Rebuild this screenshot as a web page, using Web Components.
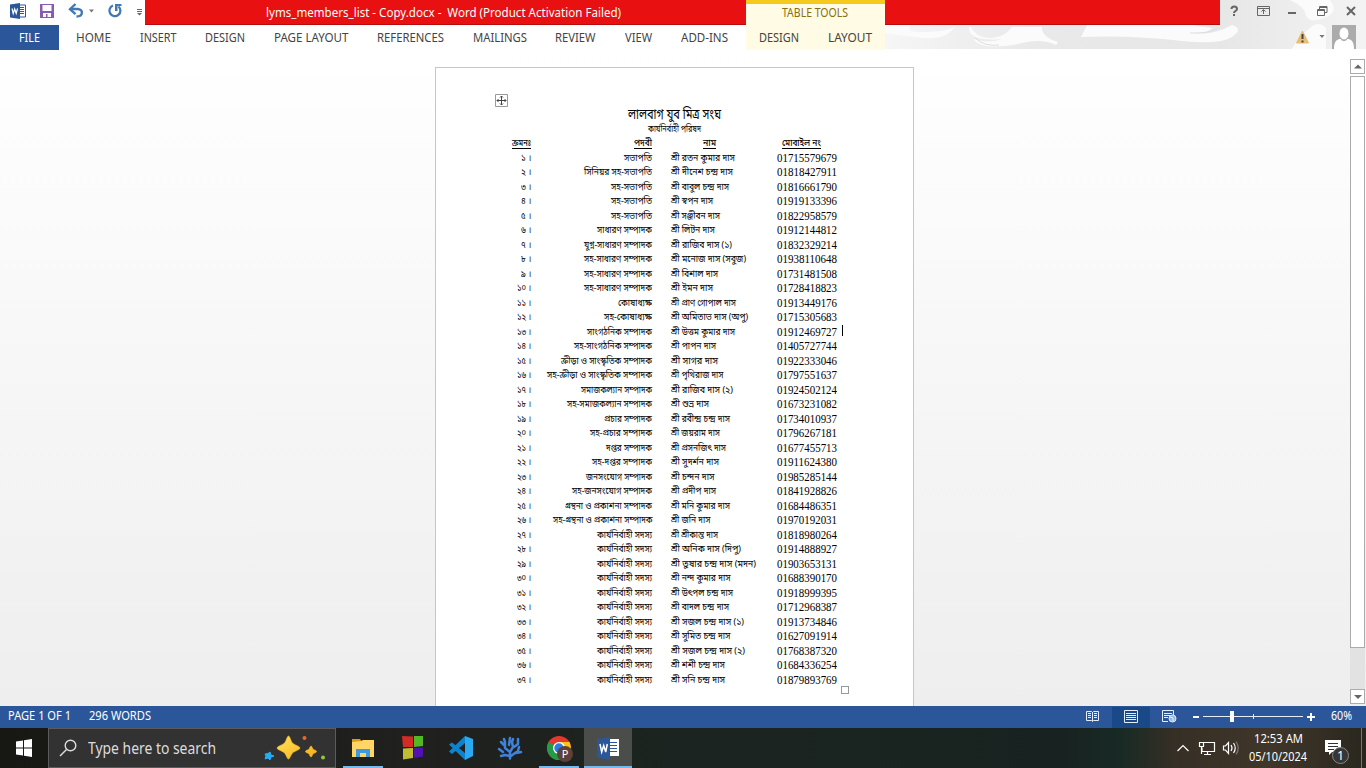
<!DOCTYPE html>
<html lang="en"><head><meta charset="utf-8"><title>lyms_members_list - Copy.docx - Word</title>
<style>html,body{margin:0;height:100%;overflow:hidden}</style></head><body>
<word-app></word-app>
<script>
/* <fit-text w="60">: one line of text, set to an exact advance width */
class FitText extends HTMLElement{
  connectedCallback(){
    const r=this.attachShadow({mode:'open'});
    r.innerHTML='<style>:host{display:inline-block;white-space:pre;text-align:left}span{display:inline-block;transform-origin:0 50%;white-space:pre}</style><span></span>';
    const s=r.querySelector('span');s.textContent=this.getAttribute('t');
    const w=+this.getAttribute('w');this.style.width=w+'px';
    const n=s.getBoundingClientRect().width;if(n)s.style.transform='scaleX('+(w/n)+')';
  }
}
function define(name,html){
  customElements.define(name,class extends HTMLElement{
    constructor(){super();this.attachShadow({mode:'open'}).innerHTML=html}
  });
}
const t=(s,w)=>`<fit-text t="${s}" w="${w}"></fit-text>`;

define('title-bar',`<style>
:host{display:grid;grid-template-columns:145px 601px 139px 335px 1fr;height:25px;font:12.500px "Noto Sans",sans-serif}
.red{background:#e81010;border-bottom:1px solid #b80c0c;box-sizing:border-box;color:#fff;height:25px;line-height:25px}
.red fit-text{margin-left:121px}
.tt{background:#fffbe5;border-top:4px solid #f6ca1c;box-sizing:border-box;color:#8a6d0c;text-align:center;line-height:18px;height:25px;padding-right:2px}
svg{display:block}</style>
<svg width="145" height="25" viewBox="0 0 145 25">
<g><path d="M19 5h6.500v12H19z" fill="#fff" stroke="#2b579a"/><path d="M20 7.500h4M20 9.500h4M20 11.500h4M20 13.500h4" stroke="#2b579a"/><path d="M10 4.500L20 3v16l-10-1.500z" fill="#2b579a"/><path d="M12 8.500l1.200 5 1.500-4.500 1.500 4.500 1.300-5" fill="none" stroke="#fff" stroke-width="1.200"/></g>
<path d="M40 4h14v14H40z" fill="#8a5bae"/><path d="M42.500 5h9v6h-9zM43 13h8v4H47.500v-3h-1.500v3h-3z" fill="#fff"/>
<path d="M71 9h6.500c6 0 6 7.500-1 7.500" fill="none" stroke="#4179b5" stroke-width="2.400"/><path d="M75.500 4L70 9.200l5.500 5" fill="none" stroke="#4179b5" stroke-width="2.400"/>
<path d="M89 9.500h5l-2.500 3z" fill="#777"/>
<path d="M113 5.500a5.500 5.500 0 1 0 5.500 1" fill="none" stroke="#4179b5" stroke-width="2.300"/><path d="M115 4h6.500v2h-4v5H115z" fill="#4179b5"/>
<path d="M137 9.500h5M137 11.500h5" stroke="#666"/><path d="M137 13h5l-2.500 2.500z" fill="#666"/></svg>
<div class="red">${t('lyms_members_list - Copy.docx -  Word (Product Activation Failed)',355)}</div>
<div class="tt">${t('TABLE TOOLS',66)}</div><div class="red"></div>
<svg width="146" height="25" viewBox="1220 0 146 25" fill="none" stroke="#666">
<path d="M1231.500 9c0-3.500 5.500-3.500 5.500 0 0 2-3 2-3 4M1234 14v2" stroke-width="2"/>
<path d="M1257.500 6.500h12v9h-12zM1257.500 8.500h12M1263.500 14v-4M1261.500 11.500l2-2 2 2"/>
<path d="M1288 13h8" stroke-width="2"/>
<path d="M1317.500 9.500h7v6h-7zM1319.500 9V6.500h7.500v6h-2M1318 10.500h6M1320 7.500h7"/>
<path d="M1347 7l8 8M1355 7l-8 8" stroke-width="2"/></svg>`);

define('ribbon-tabs',`<style>
:host{display:flex;height:25px;position:relative;font:12.500px/25px "Noto Sans",sans-serif;color:#444}
.f{background:#2b579a;color:#fff;width:59px;text-align:center}
nav{display:flex;width:687px;box-sizing:border-box;padding-left:17.300px;gap:28.700px}
nav fit-text:last-child{margin-left:1px}
.c{display:flex;width:139px;background:#fffbe5;box-sizing:border-box;padding-left:13px;gap:29px}
.a{margin-left:auto;width:80px}svg{display:block}</style>
<div class="f">${t('FILE',21)}</div>
<nav>${[['HOME',35],['INSERT',36.5],['DESIGN',40],['PAGE LAYOUT',74.5],['REFERENCES',67],['MAILINGS',54],['REVIEW',40.5],['VIEW',27],['ADD-INS',47]].map(a=>t(...a)).join('')}</nav>
<div class="c">${t('DESIGN',40)}${t('LAYOUT',44)}</div>
<svg class="a" width="80" height="25" viewBox="1286 25 80 25"><path d="M1302.500 31l6 12h-12z" fill="#e8bd77" stroke="#e8bd77" stroke-linejoin="round"/><path d="M1302.500 34v5M1302.500 40.500v2" stroke="#444" stroke-width="2"/><path d="M1319.500 35h5l-2.500 3z" fill="#777"/><path d="M1332 25h24v24h-24z" fill="#ababab"/><path d="M1334 49c0-8 3-10 7-10l3 2 3-2c4 0 7 2 7 10z" fill="#fff"/><ellipse cx="1344" cy="33.500" rx="4.500" ry="6" fill="#fff"/><path d="M1341 39.500q3 2.500 6 0" fill="none" stroke="#ababab"/></svg>`);

const pos={a:['সভাপতি',28],b:['সহ-সভাপতি',41],s:['সহ-সাধারণ সম্পাদক',68],k:['কার্যনির্বাহী সদস্য',55]};
const rows=[
['a','রতন কুমার দাস',64,'01715579679'],[['সিনিয়র সহ-সভাপতি',68],'দীনেশ চন্দ্র দাস',62,'01818427911'],
['b','বাবুল চন্দ্র দাস',58,'01816661790'],['b','স্বপন দাস',42,'01919133396'],['b','সঞ্জীবন দাস',49,'01822958579'],
[['সাধারণ সম্পাদক',55],'লিটন দাস',44,'01912144812'],[['যুগ্ন-সাধারণ সম্পাদক',68],'রাজিব দাস (১)',61,'01832329214'],
['s','মনোজ দাস (সবুজ)',75,'01938110648'],['s','বিশাল দাস',47,'01731481508'],['s','ইমন দাস',42,'01728418823'],
[['কোষাধ্যক্ষ',34],'প্রাণ গোপাল দাস',65,'01913449176'],[['সহ-কোষাধ্যক্ষ',48],'অমিতাভ দাস (অপু)',77,'01715305683'],
[['সাংগঠনিক সম্পাদক',65],'উত্তম কুমার দাস',64,'01912469727'],[['সহ-সাংগঠনিক সম্পাদক',78],'পাপন দাস',45,'01405727744'],
[['ক্রীড়া ও সাংস্কৃতিক সম্পাদক',91],'সাগর দাস',47,'01922333046'],[['সহ-ক্রীড়া ও সাংস্কৃতিক সম্পাদক',105],'পৃথিরাজ দাস',52.5,'01797551637'],
[['সমাজকল্যান সম্পাদক',71],'রাজিব দাস (২)',62,'01924502124'],[['সহ-সমাজকল্যান সম্পাদক',85],'শুভ্র দাস',38,'01673231082'],
[['প্রচার সম্পাদক',48],'রবীন্দ্র চন্দ্র দাস',59,'01734010937'],[['সহ-প্রচার সম্পাদক',62],'জয়রাম দাস',49,'01796267181'],
[['দপ্তর সম্পাদক',46],'প্রসনজিৎ দাস',55,'01677455713'],[['সহ-দপ্তর সম্পাদক',60],'সুদর্শন দাস',48,'01911624380'],
[['জনসংযোগ সম্পাদক',66],'চন্দন দাস',43.5,'01985285144'],[['সহ-জনসংযোগ সম্পাদক',80],'প্রদীপ দাস',45,'01841928826'],
[['গ্রন্থনা ও প্রকাশনা সম্পাদক',87],'মনি কুমার দাস',59,'01684486351'],[['সহ-গ্রন্থনা ও প্রকাশনা সম্পাদক',99.5],'জনি দাস',39.5,'01970192031'],
['k','শ্রীকান্ত দাস',47,'01818980264'],['k','অনিক দাস (দিপু)',70,'01914888927'],['k','তুষার চন্দ্র দাস (মদন)',85,'01903653131'],
['k','নন্দ কুমার দাস',59.5,'01688390170'],['k','উৎপল চন্দ্র দাস',62,'01918999395'],['k','বাদল চন্দ্র দাস',58,'01712968387'],
['k','সজল চন্দ্র দাস (১)',73,'01913734846'],['k','সুমিত চন্দ্র দাস',59.5,'01627091914'],['k','সজল চন্দ্র দাস (২)',74,'01768387320'],
['k','শশী চন্দ্র দাস',54,'01684336254'],['k','সনি চন্দ্র দাস',54,'01879893769']];
const bn=n=>String(n).replace(/\d/g,d=>'০১২৩৪৫৬৭৮৯'[d]);

define('member-table',`<style>
:host{display:block;font:9px/14.5px "Noto Sans Bengali","Noto Serif Bengali",serif;color:#000}
.r{display:grid;grid-template-columns:31px 121px 19px 106px 70px;height:14.500px;white-space:nowrap}
.r>:nth-child(1),.r>:nth-child(2){text-align:right}
.r>:nth-child(4){grid-column:5}.r>:nth-child(3){grid-column:4}
.p{font:12px/12px "Liberation Serif",serif}
.h fit-text{box-shadow:0 -1.500px 0 #000 inset;height:11px;line-height:11px;font-weight:500}
.h fit-text{box-shadow:none;background:linear-gradient(#000,#000) 0 9px/100% 1px no-repeat}
.h>:nth-child(3){padding-left:32px}.h>:nth-child(4){padding-left:5px}
</style>
<div class="r h"><div>${t('ক্রমনঃ',19)}</div><div>${t('পদবী',18)}</div><div>${t('নাম',13)}</div><div>${t('মোবাইল নং',39)}</div></div>
${rows.map((r,i)=>`<div class="r"><div>${t(bn(i+1)+' ।',i<9?10:14)}</div><div>${t(...(pos[r[0]]||r[0]))}</div><div>${t('শ্রী '+r[1],r[2])}</div><div class="p">${t(r[3],60)}</div></div>`).join('')}`);

define('document-page',`<style>
:host{display:block;position:relative;box-sizing:border-box;width:479px;height:640px;background:#fff;border:1px solid #c6c6c6;border-bottom:0;padding:40px 0 0 64px;font-family:"Noto Sans Bengali","Noto Serif Bengali",serif}
.t{width:349px;text-align:center}
.t1{font-size:14px;line-height:16px;height:16px}.t2{font-size:9px;line-height:13px;height:14px}
member-table{margin-top:-1px}
.x{position:absolute}</style>
<div class="t t1">${t('লালবাগ যুব মিত্র সংঘ',93)}</div><div class="t t2">${t('কার্যনির্বাহী পরিষদ',53)}</div>
<member-table></member-table>
<svg class="x" style="left:59px;top:26px" width="13" height="13" fill="none"><path d="M.5.500h12v12H.5z" stroke="#999"/><path d="M6.500 2v9M2 6.500h9M5 3.500l1.500-1.500L8 3.500M5 9.500L6.500 11 8 9.500M3.500 5L2 6.500 3.500 8M9.500 5L11 6.500 9.500 8" stroke="#444"/></svg>
<div class="x" style="left:406px;top:257px;width:1px;height:11px;background:#000"></div>
<div class="x" style="left:405px;top:618px;width:6px;height:6px;border:1px solid #999"></div>`);

define('scroll-bar',`<style>:host{display:flex;flex-direction:column;width:16px;height:645px}
div{box-sizing:border-box;border:1px solid #ababab;background:#fff;width:15px;height:15px}.th{height:572px;margin-top:2px}.g{flex:1;border:0;background:#e2e2e2}svg{display:block}</style>
<div><svg width="13" height="13"><path d="M3 8.500h8l-4-4z" fill="#666"/></svg></div><div class="th"></div><div class="g"></div><div><svg width="13" height="13"><path d="M3 5h8L7 9z" fill="#666"/></svg></div>`);

define('doc-area',`<style>:host{display:grid;grid-template-columns:435px 1fr 16px;height:656px;background:linear-gradient(#fff,#eee);overflow:hidden}
document-page{margin-top:17px}scroll-bar{margin-top:9px}</style><span></span><document-page></document-page><scroll-bar></scroll-bar>`);

define('status-bar',`<style>:host{display:flex;height:22px;background:#2b579a;color:#fff;font:12px/20px "Noto Sans",sans-serif}
.l{padding-left:8px;flex:1;display:flex;gap:18px}svg{display:block}.z{width:35px}</style>
<div class="l">${t('PAGE 1 OF 1',63)}${t('296 WORDS',62)}</div>
<svg width="250" height="22" viewBox="1081 706 250 22" fill="none" stroke="#e6edf7"><path d="M1112 707h38v21h-38z" fill="#194987" stroke="none"/>
<path d="M1086.500 711.500h5l1 1 1-1h5v9h-5l-1 1-1-1h-5zM1092.500 712v9M1088 713.500h3M1088 715.500h3M1088 717.500h3M1094 713.500h3M1094 715.500h3M1094 717.500h3"/>
<path d="M1124.500 710.500h13v12h-13zM1126 713.500h10M1126 715.500h10M1126 717.500h10M1126 719.500h10"/>
<path d="M1168 721.500h-5.500v-11h11v5M1164 713.500h8M1164 715.500h6M1164 717.500h4"/><circle cx="1172.500" cy="718.500" r="3.500" fill="#9ab7df"/><path d="M1170 717l3 1v3"/>
<path d="M1193 717h6M1307 717h8M1311 713v8" stroke="#fff" stroke-width="2"/><path d="M1203 716.500h100M1253.500 714v5"/><path d="M1230 711h4v11h-4z" fill="#fff" stroke="none"/></svg>
<div class="z">${t('60%',21)}</div>`);

define('task-bar',`<style>:host{display:flex;height:40px;background:linear-gradient(90deg,#171714 0,#20201e 30%,#1b2420 50%,#182321 78%,#182a25 82%,#362f25 86%,#40362a 93%,#29271e 100%);color:#fff;font:15.500px "Noto Sans",sans-serif}
.s{display:flex;box-sizing:border-box;width:288px;border:1px solid #5b5b59;background:#323232;color:#dcdcdc;line-height:38px;height:40px}
svg{display:block}.c{font-size:12.500px;line-height:18px;padding-top:2px;width:60px;margin-right:8px}.c fit-text{display:block;margin:0 auto}.tr{margin-left:auto}</style>
<svg width="48" height="40"><path d="M16 13.500l7-1v7h-7zM24 12.300l8-1.300v8.500h-8zM16 20.500h7v7l-7-1zM24 20.500h8V29l-8-1.300z" fill="#fff"/></svg>
<div class="s"><svg width="39" height="38" viewBox="49 729 39 38" fill="none" stroke="#ddd" stroke-width="1.400"><circle cx="70.500" cy="745.500" r="5.300"/><path d="M66.500 749.500L60 756"/></svg>${t('Type here to search',128)}
<svg style="margin-left:48px" width="64" height="38" viewBox="264 729 64 38"><defs><linearGradient id="g" x2="1" y2="1"><stop stop-color="#ffe35b"/><stop offset="1" stop-color="#f5ac14"/></linearGradient></defs><path d="M288.500 736c1.500 0 2.500 6 4.500 7.500s7 3 7 4.500-5 3-7 4.500-3 6.500-4.500 6.500-2.500-5-4.500-6.500-7-3-7-4.500 5-3 7-4.500 3-7.500 4.500-7.500zM311 746c1 0 1.500 3 2.500 3.500s3 1 3 2-2 1.500-3 2-1.500 3.500-2.500 3.500-1.500-3-2.500-3.500-3-1-3-2 2-1.500 3-2 1.500-3.500 2.500-3.500z" fill="url(#g)" stroke="#fbbd22" stroke-width=".6"/><path d="M270 752l1 3 3 1-3 1-1 3-2-2-3 1 1-3-1-2 3-.5z" fill="#24aef3" stroke="#24aef3"/><circle cx="304.500" cy="738" r="2" fill="#ed652b"/><circle cx="323" cy="757.500" r="2" fill="#8bcc3e"/></svg></div>
<svg width="296" height="40" viewBox="336 728 296 40">
<path d="M584 728h48v40h-48z" fill="#4b4d4b"/><path d="M343 766h40v2h-40zM539 766h40v2h-40zM584 766h48v2h-48z" fill="#76b9ed"/>
<path d="M352 739h8l2 3h-10z" fill="#e09b08"/><path d="M352 742l9-1 2-1h11v17h-22z" fill="#ffd666"/><path d="M356 757v-8h14v8h-4v-4h-6v4z" fill="#3d9ade"/>
<path d="M402 736l11 .5v10.500h-10z" fill="#d22c24"/><path d="M414 736h9v10l-9 1z" fill="#52b823"/><path d="M403 748.500l10-.5v10l-10 1.500z" fill="#c0bd31"/><path d="M414 748l9-.5v9l-9 1.500z" fill="#5013b0"/>
<path d="M465 736l8 3v17l-8 4z" fill="#2aa9f1"/><path d="M465 736v7l-13 11-3-2.500zM449 744.500l3-2 13 10.500v7z" fill="#0d83cf"/>
<g fill="none" stroke="#3f82da" stroke-width="2.500" stroke-linecap="round" stroke-linejoin="round"><path d="M510 758.500v-6.500l-5-4v-6l-1-3M505 746l-4-4M510 756l-5-1-4 1M510 752l3-5-1-5 1-3M514 747l4-3v-5M511 756l4-3 3-2 1-4M516 753l5-1M503 752l-4-3M509 745l1-7"/></g>
<circle cx="559" cy="748" r="12" fill="#e3382e"/><path d="M559 748h12a12 12 0 0 1-12 12z" fill="#fbc41c"/><path d="M548.600 742a12 12 0 0 0 10.400 18l5-9z" fill="#259b48"/><path d="M559 742h10.500q1.500 3 1.500 7h-12z" fill="#fbc41c"/><circle cx="559" cy="748" r="6" fill="#fff"/><circle cx="559" cy="748" r="4.700" fill="#287de9"/><circle cx="565" cy="754" r="8" fill="#5d4037"/><text x="565" y="758" font-size="11" fill="#fff" text-anchor="middle">P</text>
<path d="M608 739h11v17h-11z" fill="#fff"/><path d="M610 742.500h7M610 745.500h7M610 748.500h7M610 751.500h7" stroke="#2b579a"/><path d="M597 739l13-2v23l-13-2.500z" fill="#2b579a"/><path d="M600 744l1.700 8 2-6.500 2 6.500 1.600-8" fill="none" stroke="#fff" stroke-width="1.500"/></svg>
<svg class="tr" width="76" height="40" viewBox="1172 728 76 40" fill="none" stroke="#fff" stroke-width="1.200"><path d="M1177.500 751l5.500-5.500 5.500 5.500M1203 742.500h11.500v9H1202v-4M1204 754.500h7M1207.500 752v2M1199.500 742.500h4v4h-4zM1201.500 746v8M1223.500 746h2l3-3.500v11l-3-3.500h-2zM1231 745q2 3 0 6M1233.500 743q3.500 5 0 10"/><path d="M1236 741.500q4.500 6.500 0 13" stroke="#777"/></svg>
<div class="c">${t('12:53 AM',49)}${t('05/10/2024',58)}</div>
<svg width="50" height="40" viewBox="1316 728 50 40"><path d="M1325 740h16v12h-9l-3 3v-3h-4z" fill="#fff"/><path d="M1328 743.500h10M1328 746.500h10M1328 749.500h6" stroke="#333"/><circle cx="1340.500" cy="755.500" r="8" fill="#363636" stroke="#888"/><text x="1340.500" y="760" font-size="12.500" fill="#fff" text-anchor="middle">1</text><path d="M1361.500 728v40" stroke="#777"/></svg>`);

define('word-app',`<style>:host{display:block;position:relative;width:1366px;height:768px;background:#fff;overflow:hidden}
.art{position:absolute;left:0;top:0;z-index:0}title-bar,ribbon-tabs,doc-area,status-bar,task-bar{position:relative}</style>
<svg class="art" width="1366" height="50"><defs><linearGradient id="f"><stop stop-color="#f6f6f6"/><stop offset=".3" stop-color="#e9e9e9"/><stop offset=".7" stop-color="#e7e7e7"/><stop offset="1" stop-color="#f3f3f3"/></linearGradient></defs><path d="M885 0h481v49H885z" fill="url(#f)"/>
<g fill="#fbfbfb"><path d="M885 25h26q-8 8 16 7t28-6q-8 14-30 12t-40-5z"/><path d="M971 27q4 10 18 11t23-11h30q-1 10 16 15l-2 3q-14-7-34-2t-36 3q-12-3-12-7 14 5 28 0-34 3-33-12z"/><path d="M1081 37l6-12h105l20 3q-4 6-20 4 18 5 40-7 12 4 0 12t-50 4q-50-6-101-4z"/><path d="M1290 0h40q10 12-6 18t-18-3-16-15zM1310 28q8-8 16 0v21h-34q6-12 18-21z"/></g>
<path d="M975 38q10 9 24 7M1190 33q18 1 28-5" fill="none" stroke="#dedede"/></svg>
<title-bar></title-bar><ribbon-tabs></ribbon-tabs><doc-area></doc-area><status-bar></status-bar><task-bar></task-bar>`);
customElements.define('fit-text',FitText);
</script></body></html>
